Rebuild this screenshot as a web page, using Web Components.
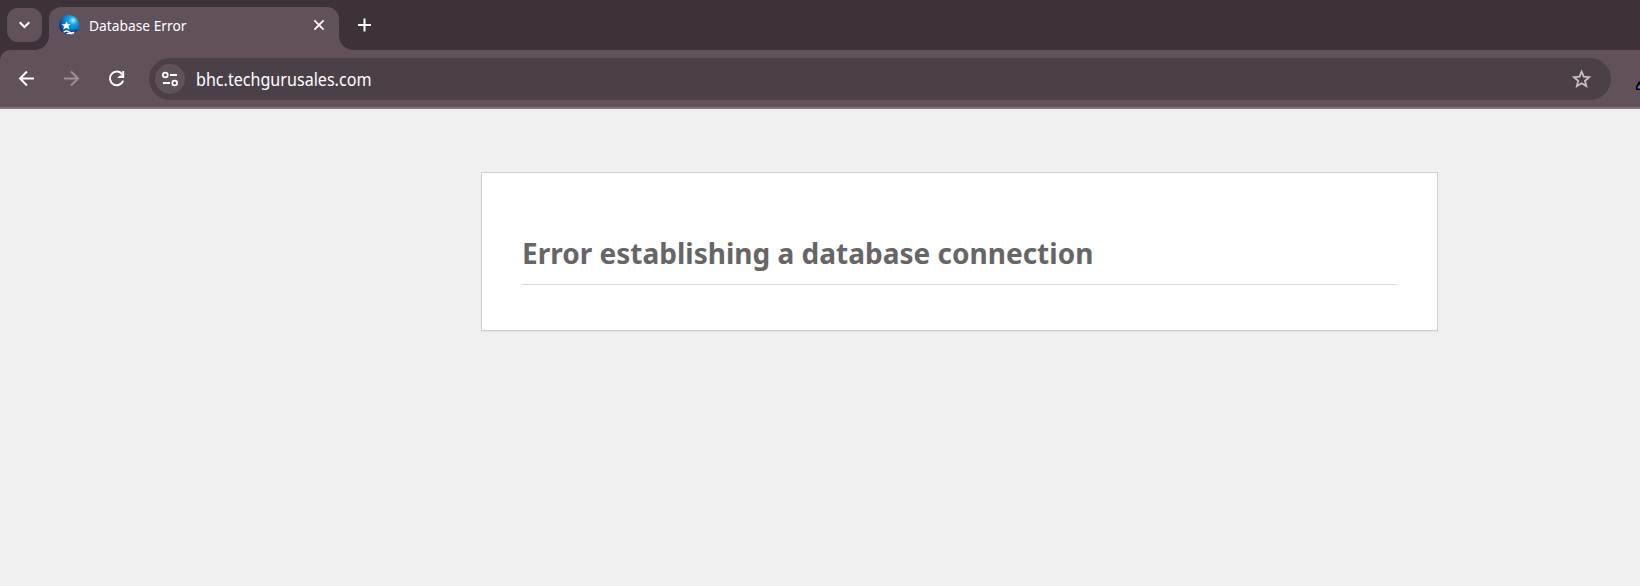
<!DOCTYPE html>
<html lang="en">
<head>
<meta charset="utf-8">
<title>Database Error</title>
<style>
html,body{margin:0;height:100%;overflow:hidden;background:#f0f0f0;font-family:"Noto Sans","Open Sans",sans-serif}
</style>
</head>
<body>
<browser-window>
  <tab-strip slot="tabs"><browser-tab>Database Error</browser-tab></tab-strip>
  <nav-toolbar slot="toolbar"><address-bar>bhc.techgurusales.com</address-bar></nav-toolbar>
  <error-card>Error establishing a database connection</error-card>
</browser-window>
<script>
function define(name, markup) {
  customElements.define(name, class extends HTMLElement {
    constructor() {
      super();
      this.attachShadow({mode: 'open'}).innerHTML = markup;
    }
  });
}

define('browser-window', `
<style>
:host{display:flex;flex-direction:column;width:100%;height:100vh;background:#3d3239;overflow:hidden}
main{flex:1;background:#f0f0f0;display:flex;padding:63px 202px 0 481px;align-items:flex-start}
</style>
<slot name="tabs"></slot><slot name="toolbar"></slot><main><slot></slot></main>`);

define('tab-strip', `
<style>
:host{display:flex;height:50px;box-sizing:border-box;padding:7px 0 0 7px;background:#3d3239}
.search{width:35px;height:34px;border-radius:11px;background:#61515b;margin:1px 7px 0 0;flex:none}
svg{display:block}
.new{margin:8px 0 0 16px}
</style>
<div class="search"><svg width="35" height="34" fill="none" stroke="#fff" stroke-width="2"><path d="M12.7 14.2l4.8 4.8 4.8-4.8"/></svg></div>
<slot></slot>
<svg class="new" width="18" height="20" fill="none" stroke="#fff" stroke-width="2"><path d="M9.5 3.5v13M3 10h13"/></svg>`);

define('browser-tab', `
<style>
:host{display:flex;position:relative;align-items:center;width:290px;height:43px;box-sizing:border-box;padding:0 13px 7px 10px;background:#61515b;border-radius:12px 12px 0 0;color:#fff}
:host::before,:host::after{content:"";position:absolute;bottom:0;width:14px;height:14px}
:host::before{right:100%;background:radial-gradient(circle at 0 0,transparent 13.5px,#61515b 14.2px)}
:host::after{left:100%;background:radial-gradient(circle at 100% 0,transparent 13.5px,#61515b 14.2px)}
span{flex:1;margin-left:10px;font-size:14.5px;line-height:20px;white-space:nowrap;transform:scaleX(.95);transform-origin:0 50%}
svg{display:block;flex:none}
</style>
<svg width="20" height="20" viewBox="0 0 20 20">
<defs><radialGradient id="g" cx=".7" cy=".27" r=".75"><stop offset="0" stop-color="#c8f4ff"/><stop offset=".12" stop-color="#60d4f8"/><stop offset=".28" stop-color="#12a4e6"/><stop offset=".6" stop-color="#067fca"/><stop offset="1" stop-color="#0b2f7e"/></radialGradient><clipPath id="c"><circle cx="10" cy="10" r="10"/></clipPath></defs>
<circle cx="10" cy="10" r="10" fill="url(#g)"/>
<g clip-path="url(#c)"><path d="M1 14Q10 18 19 14L18 20H1z" fill="#12408e"/>
<path d="M8 6.3l.7 3 3-.4-2.4 2.2 1.2 3.4-3.1-1.8-3.2 2.1.8-3.5L2.4 9.2l3.6.1z" fill="#fff"/>
<path d="M4.5 17.2q3.3-2.2 5.3-.3 2.5 1.6 5.5.3M7.5 19.1q2-1.3 4-.2 2 .9 4-.4" fill="none" stroke="#fff" stroke-width="1.3"/></g>
</svg>
<span><slot></slot></span>
<svg width="14" height="14" fill="none" stroke="#fff" stroke-width="1.8"><path d="M2.4 2.4l9.2 9.2M11.6 2.4l-9.2 9.2"/></svg>`);

define('nav-toolbar', `
<style>
:host{display:flex;height:59px;box-sizing:border-box;align-items:center;padding:1px 0 0 15px;background:#61515b;border-bottom:2px solid #85747f;border-radius:10px 0 0 0;overflow:hidden}
svg{display:block;flex:none}
.nav{margin-right:21px}
.reload{margin-right:20px}
slot{display:block;flex:1}
.ext{margin:15px 0 0 24px}
</style>
<svg class="nav" width="24" height="24" fill="none" stroke="#fff" stroke-width="2"><path d="M19 11.5H5.3M12 4.5l-7 7 7 7"/></svg>
<svg class="nav" width="24" height="24" fill="none" stroke="#9b8f97" stroke-width="2"><path d="M4 11.5h13.7M11 4.5l7 7-7 7"/></svg>
<svg class="reload" width="24" height="24" fill="none" stroke="#fff" stroke-width="2"><path d="M17.2 7.3A6.8 6.8 0 1 0 18.2 13.6"/><path d="M19.2 4v7h-7l2.6-2.6h2.4V4z" fill="#fff" stroke="none"/></svg>
<slot></slot>
<svg class="ext" width="5" height="24"><path d="M5 6.5H3.5L2.5 9 1 11.5V15h4z" fill="#000"/><path d="M5 9.5L2.5 12v1.5H5z" fill="#6670e8"/></svg>`);

define('address-bar', `
<style>
:host{display:flex;align-items:center;height:42px;box-sizing:border-box;border-radius:21px;background:#4c4048;padding:0 19px 0 6px;color:#fff}
.info{width:30px;height:30px;border-radius:50%;background:#61515b;flex:none}
span{flex:1;margin-left:10.5px;font-size:17.5px;line-height:26px;white-space:nowrap;transform:scaleX(.92);transform-origin:0 50%}
svg{display:block;flex:none}
</style>
<div class="info"><svg width="30" height="30" fill="none" stroke="#fff" stroke-width="1.8"><circle cx="10.3" cy="11" r="2.4"/><circle cx="19.7" cy="19" r="2.4"/><path d="M15 11h7M8 19h7"/></svg></div>
<span><slot></slot></span>
<svg width="20" height="20" fill="none" stroke="#c7c0c5" stroke-width="1.8"><path d="M9.6 2.7l2.1 5 5.5.5-4.2 3.6 1.3 5.4-4.7-2.9-4.7 2.9 1.3-5.4L2 8.2l5.5-.5z"/></svg>`);

define('error-card', `
<style>
:host{display:block;width:100%;height:159px;box-sizing:border-box;border:1px solid #ccd0d4;background:#fff;box-shadow:0 1px 1px rgba(0,0,0,.04);padding:59px 40px 0}
h1{margin:0;height:53px;box-sizing:border-box;border-bottom:1px solid #dadada;color:#666;font-size:29px;line-height:41px;font-weight:700;white-space:nowrap}
span{display:inline-block;transform:scaleX(.966);transform-origin:0 50%}
</style>
<h1><span><slot></slot></span></h1>`);
</script>
</body>
</html>
